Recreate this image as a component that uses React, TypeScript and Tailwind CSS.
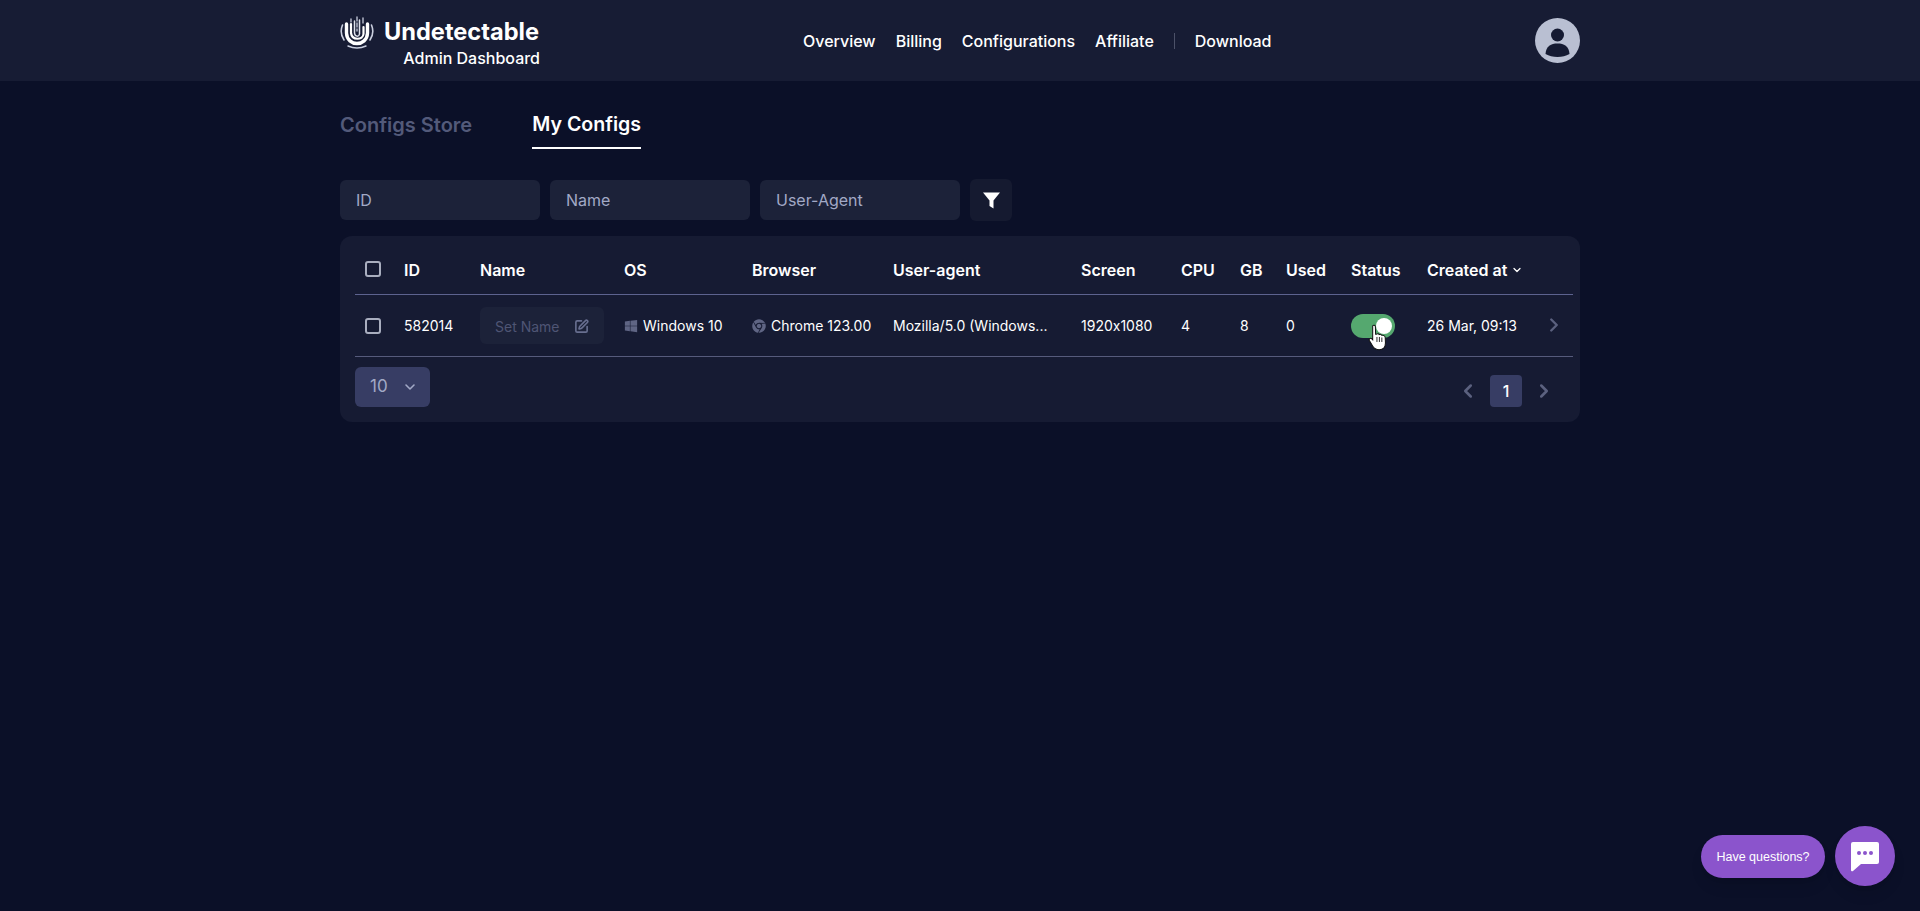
import { ChevronDown, ChevronLeft, ChevronRight, SquarePen } from 'lucide-react';
import { FaChrome, FaWindows } from 'react-icons/fa';

const gridCols = 'grid grid-cols-[49px_76px_144px_128px_141px_188px_100px_59px_46px_65px_76px_146px] items-center';

function Logo() {
  return (
    <svg width="36" height="36" viewBox="0 0 36 36" fill="none" stroke="#fff" strokeLinecap="round">
      <path d="M3.5 11 A16 16 0 0 0 5 26" stroke="#c9cede" strokeWidth="1.6" />
      <path d="M32.5 11 A16 16 0 0 1 31 26" stroke="#c9cede" strokeWidth="1.6" />
      <path d="M9 32 Q18 36 27 32" stroke="#c9cede" strokeWidth="1.5" />
      <path d="M7.5 10 V19 C8 33 28 33 28.5 19 V10" strokeWidth="3.4" />
      <path d="M24.5 13 V20 C24 26 13 27 12 19 V10" strokeWidth="2.2" />
      <path d="M15.5 7 V19 C16 23 20 23 20.5 20 V6" stroke="#dfe2ec" strokeWidth="1.5" />
      <path d="M18 3 V17" stroke="#c9cede" strokeWidth="1.3" strokeDasharray="4 2" />
      <path d="M12 5 V8" stroke="#c9cede" strokeWidth="1.3" />
      <path d="M24 4 V9" stroke="#c9cede" strokeWidth="1.3" />
    </svg>
  );
}

function Avatar() {
  return (
    <svg width="45" height="45" viewBox="0 0 45 45">
      <circle cx="22.5" cy="22.5" r="22.5" fill="#b9bfd2" />
      <circle cx="22.5" cy="17" r="6.5" fill="#151a32" />
      <path d="M10.5 36 C11 28 16 25.5 22.5 25.5 C29 25.5 34 28 34.5 36 C31 38 27 39 22.5 39 C18 39 14 38 10.5 36 Z" fill="#151a32" />
    </svg>
  );
}

function Cursor() {
  return (
    <svg className="absolute left-[17px] top-[10px]" width="19" height="27" viewBox="0 0 17 24">
      <path
        d="M4.2 1.5 C5 0.7 6.4 1 6.6 2.2 L6.8 9 L7.6 9 C8.6 8.4 9.6 8.6 10 9.4 C11 8.9 12 9.2 12.4 10.1 C13.6 9.8 15.2 10.4 15.4 12 L15.6 17 C15.6 20.5 13.5 23 10 23 C7 23 5.4 21.8 4 19.4 L1.2 14.6 C0.6 13.4 2 12 3.2 13 L4.2 14 Z"
        fill="#fff"
        stroke="#111"
        strokeWidth="0.9"
      />
      <path d="M8 11.5 V16 M10.2 11.5 V16 M12.4 12 V16" stroke="#111" strokeWidth="0.8" />
    </svg>
  );
}

function Checkbox() {
  return <div className="h-4 w-4 rounded-[3px] border-2 border-[#a9aebf]" />;
}

function FilterInput({ label }: { label: string }) {
  return (
    <div className="flex h-10 w-[200px] items-center rounded-md bg-[#1c2239] pl-4 text-base text-[#a2a9c6]">{label}</div>
  );
}

export default function App() {
  const headers = ['ID', 'Name', 'OS', 'Browser', 'User-agent', 'Screen', 'CPU', 'GB', 'Used', 'Status'];

  return (
    <div className="relative h-[911px] overflow-hidden bg-[#0b1028] font-['Inter',sans-serif] text-white">
      <header className="h-[81px] bg-[#171c34]">
        <div className="mx-auto flex h-full w-[1240px] items-center">
          <div className="flex w-[200px] flex-col self-start pt-[14px]">
            <div className="flex items-center gap-[9px]">
              <div className="-ml-px">
                <Logo />
              </div>
              <span className="text-[23.6px] leading-[26px] font-bold">Undetectable</span>
            </div>
            <div className="-mt-px self-end text-base leading-[18px] font-medium">Admin Dashboard</div>
          </div>
          <nav className="ml-[263px] flex items-center text-base leading-5 font-medium">
            <span>Overview</span>
            <span className="ml-5">Billing</span>
            <span className="ml-5">Configurations</span>
            <span className="ml-5">Affiliate</span>
            <span className="mx-5 h-4 w-px bg-[#4c5168]" />
            <span>Download</span>
          </nav>
          <div className="ml-auto">
            <Avatar />
          </div>
        </div>
      </header>

      <main className="mx-auto w-[1240px]">
        <div className="flex h-[68px] items-end gap-[60px]">
          <div className="pb-[12px] text-xl leading-6 font-semibold text-[#535a7a]">Configs Store</div>
          <div className="border-b-2 border-white pb-[11px] text-[19.6px] leading-6 font-semibold">My Configs</div>
        </div>

        <div className="mt-[30px] flex items-center gap-[10px]">
          <FilterInput label="ID" />
          <FilterInput label="Name" />
          <FilterInput label="User-Agent" />
          <div className="flex h-[42px] w-[42px] items-center justify-center rounded-md bg-[#151a30]">
            <svg width="17" height="17" viewBox="0 0 17 17" fill="#fff">
              <path d="M0 0.5 H17 L10.5 8.5 V16.5 L6.5 14 V8.5 Z" />
            </svg>
          </div>
        </div>

        <div className="mt-[15px] h-[186px] rounded-xl bg-[#161b33] pl-[15px] pr-[7px]">
          <div className={`${gridCols} h-[59px] border-b border-[#5d638f] pt-[9px] text-base font-semibold`}>
            <div className="-mt-[2px] pl-[10px]">
              <Checkbox />
            </div>
            {headers.map((h) => (
              <div key={h}>{h}</div>
            ))}
            <div className="flex items-center gap-1">
              Created at
              <ChevronDown size={12} strokeWidth={2.5} />
            </div>
          </div>

          <div className={`${gridCols} h-[62px] border-b border-[#565b7c] text-[14px]`}>
            <div className="pl-[10px]">
              <Checkbox />
            </div>
            <div>582014</div>
            <div>
              <div className="flex h-[37px] w-[124px] items-center rounded-md bg-[#1c2239] pl-[15px] pt-px text-[#4f5574]">
                Set Name
                <SquarePen size={15} strokeWidth={2.6} className="ml-[14px] text-[#686f90]" />
              </div>
            </div>
            <div className="flex items-center gap-[5px]">
              <FaWindows size={14} className="text-[#5f6584]" />
              Windows 10
            </div>
            <div className="flex items-center gap-[5px]">
              <FaChrome size={14} className="text-[#5f6584]" />
              Chrome 123.00
            </div>
            <div>Mozilla/5.0 (Windows...</div>
            <div className="[font-feature-settings:'calt'_0]">1920x1080</div>
            <div>4</div>
            <div>8</div>
            <div>0</div>
            <div className="relative">
              <div className="flex h-6 w-[44px] items-center justify-end rounded-full bg-[#55a86f] pr-[3px]">
                <div className="h-4 w-4 rounded-full bg-white" />
              </div>
              <Cursor />
            </div>
            <div className="relative">
              26 Mar, 09:13
              <ChevronRight size={22} strokeWidth={2.6} className="absolute -top-px left-[116px] text-[#5b617f]" />
            </div>
          </div>

          <div className="mt-[10px] flex items-start justify-between pr-[18px]">
            <div className="flex h-10 w-[75px] items-center rounded-md bg-[#373d64] pl-[15px] text-[17px] text-[#a2a9c6]">
              10
              <ChevronDown size={16} strokeWidth={2.4} className="ml-[14px]" />
            </div>
            <div className="mt-2 flex items-center gap-[11px] text-[#5b617f]">
              <ChevronLeft size={22} strokeWidth={2.8} />
              <div className="flex h-8 w-8 items-center justify-center rounded bg-[#373d64] text-base font-medium text-white">
                1
              </div>
              <ChevronRight size={22} strokeWidth={2.8} />
            </div>
          </div>
        </div>
      </main>

      <div className="absolute top-[835px] left-[1701px] flex h-[43px] w-[124px] items-center justify-center rounded-full bg-[#8b54cc] pt-px font-['Liberation_Sans',sans-serif] text-[12.5px] shadow-lg">
        Have questions?
      </div>
      <div className="absolute top-[826px] left-[1835px] flex h-[60px] w-[60px] items-center justify-center rounded-full bg-[#8b54cc] shadow-lg">
        <svg width="32" height="32" viewBox="0 0 32 32">
          <path
            d="M4 2 H28 A2 2 0 0 1 30 4 V22 A2 2 0 0 1 28 24 H12 L4 31 A1.2 1.2 0 0 1 2 30 V4 A2 2 0 0 1 4 2 Z"
            fill="#fff"
          />
          <circle cx="10" cy="13" r="2" fill="#8b54cc" />
          <circle cx="16" cy="13" r="2" fill="#8b54cc" />
          <circle cx="22" cy="13" r="2" fill="#8b54cc" />
        </svg>
      </div>
    </div>
  );
}
